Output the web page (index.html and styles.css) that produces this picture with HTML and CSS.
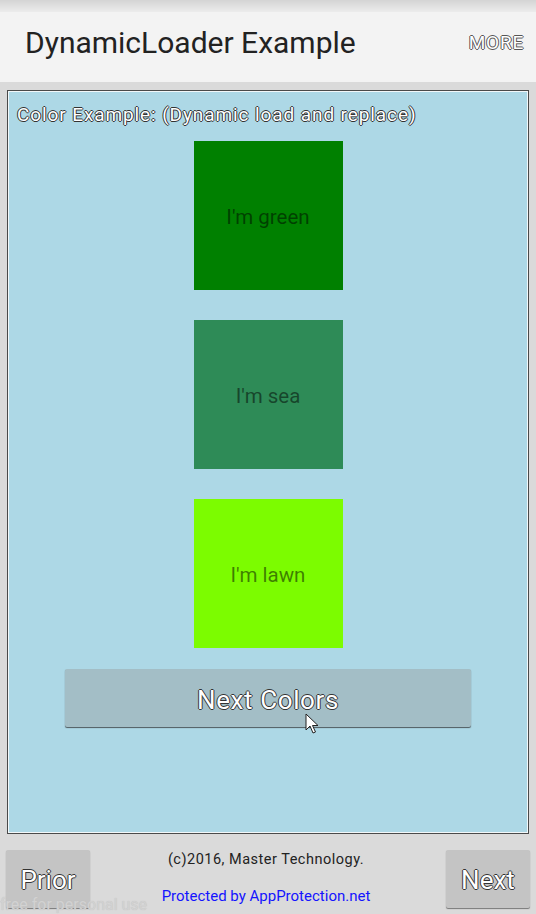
FILE: index.html
```html
<!DOCTYPE html>
<html lang="en">
<head>
    <meta charset="UTF-8">
    <meta name="viewport" content="width=device-width, initial-scale=1.0">
    <title>DynamicLoader Example</title>
    <link rel="stylesheet" href="styles.css">
</head>
<body>
<div class="statusbar"></div>
<header class="actionbar">
    <h1 class="title">DynamicLoader Example</h1>
    <span class="more outlined">MORE</span>
</header>

<main class="panel">
    <div class="caption outlined">Color Example: (Dynamic load and replace)</div>
    <div class="swatches">
        <div class="swatch green">I'm green</div>
        <div class="swatch sea">I'm sea</div>
        <div class="swatch lawn">I'm lawn</div>
    </div>
    <div class="next-colors-wrap">
        <button type="button" class="next-colors outlined">Next Colors</button>
        <svg class="cursor" width="14" height="22" viewBox="0 0 14 22">
            <path d="M1 1 L1 17 L5 13 L8 20 L10.5 19 L7.5 12.5 L13 12.5 Z" fill="#fff" stroke="#222" stroke-width="1"/>
        </svg>
    </div>
</main>

<footer class="footer">
    <button type="button" class="nav-btn outlined">Prior</button>
    <div class="credits">
        <div class="copy">(c)2016, Master Technology.</div>
        <div class="protected">Protected by AppProtection.net</div>
    </div>
    <button type="button" class="nav-btn outlined">Next</button>
    <span class="watermark">free for personal use</span>
</footer>
</body>
</html>
```

FILE: styles.css
```css
body {
    font-family: Roboto, "Liberation Sans", sans-serif;
    background-color: #dadada;
    margin: 0;
    width: 536px;
    height: 914px;
    overflow: hidden;
    position: relative;
}
.outlined {
    color: #fff;
    text-shadow: -1px 0 #333, 1px 0 #333, 0 -1px #333, 0 1px #333;
}
.statusbar {
    height: 12px;
    background: linear-gradient(#d4d4d4, #ececec);
}
.actionbar {
    height: 70px;
    box-sizing: border-box;
    background-color: #f3f3f3;
    display: flex;
    align-items: center;
    justify-content: space-between;
    padding: 0 12px 10px 25px;
}
.title {
    margin: 0;
    font-size: 30px;
    font-weight: normal;
    color: #222;
}
.more {
    font-size: 19px;
    letter-spacing: 0.8px;
    text-shadow: -1px 0 #555, 1px 0 #555, 0 -1px #555, 0 1px #555;
}
.panel {
    margin: 8px 7px 0;
    height: 744px;
    box-sizing: border-box;
    background-color: #add8e6;
    border: 1px solid #4a4a4a;
    box-shadow: inset 0 0 0 1px #f2f8fa;
}
.caption {
    font-size: 19px;
    letter-spacing: 0.9px;
    padding: 13px 0 0 9px;
    line-height: 22px;
}
.swatches {
    display: flex;
    flex-direction: column;
    align-items: center;
    gap: 30px;
    margin-top: 15px;
}
.swatch {
    width: 149px;
    height: 149px;
    display: flex;
    align-items: center;
    justify-content: center;
    font-size: 20.5px;
    padding-top: 2px;
    box-sizing: border-box;
    color: rgba(0, 0, 0, 0.5);
}
.green {
    background-color: #008000;
}
.sea {
    background-color: #2e8b57;
}
.lawn {
    background-color: #7cfc00;
}
.next-colors-wrap {
    display: flex;
    justify-content: center;
    margin-top: 21px;
    position: relative;
}
.next-colors {
    width: 406px;
    height: 58px;
    border: none;
    border-radius: 2px;
    background-color: #a3bec6;
    box-shadow: 0 1px 1px #4f5a5e;
    font-family: Roboto, "Liberation Sans", sans-serif;
    font-size: 26px;
    letter-spacing: 0.6px;
    padding: 3px 0 0;
}
.cursor {
    position: absolute;
    left: 297px;
    top: 44px;
}
.footer {
    height: 80px;
    display: flex;
    justify-content: space-between;
    align-items: flex-start;
    padding: 16px 6px 0;
    box-sizing: border-box;
    position: relative;
}
.nav-btn {
    width: 84px;
    height: 58px;
    border: none;
    border-radius: 2px;
    background-color: #c4c4c4;
    box-shadow: 0 1px 1px #777;
    font-family: Roboto, "Liberation Sans", sans-serif;
    font-size: 26px;
    padding: 2px 0 0;
}
.credits {
    text-align: center;
    padding-right: 4px;
}
.copy {
    font-size: 14.5px;
    letter-spacing: 0.5px;
    color: #222;
    margin-top: 1px;
}
.protected {
    font-size: 15px;
    color: #1414ff;
    margin-top: 19px;
}
.watermark {
    position: absolute;
    z-index: 1;
    left: 0;
    bottom: 0;
    line-height: 18px;
    font-size: 16px;
    color: #d2d2d2;
    text-shadow: 0 0 1px #bdbdbd;
}
```
